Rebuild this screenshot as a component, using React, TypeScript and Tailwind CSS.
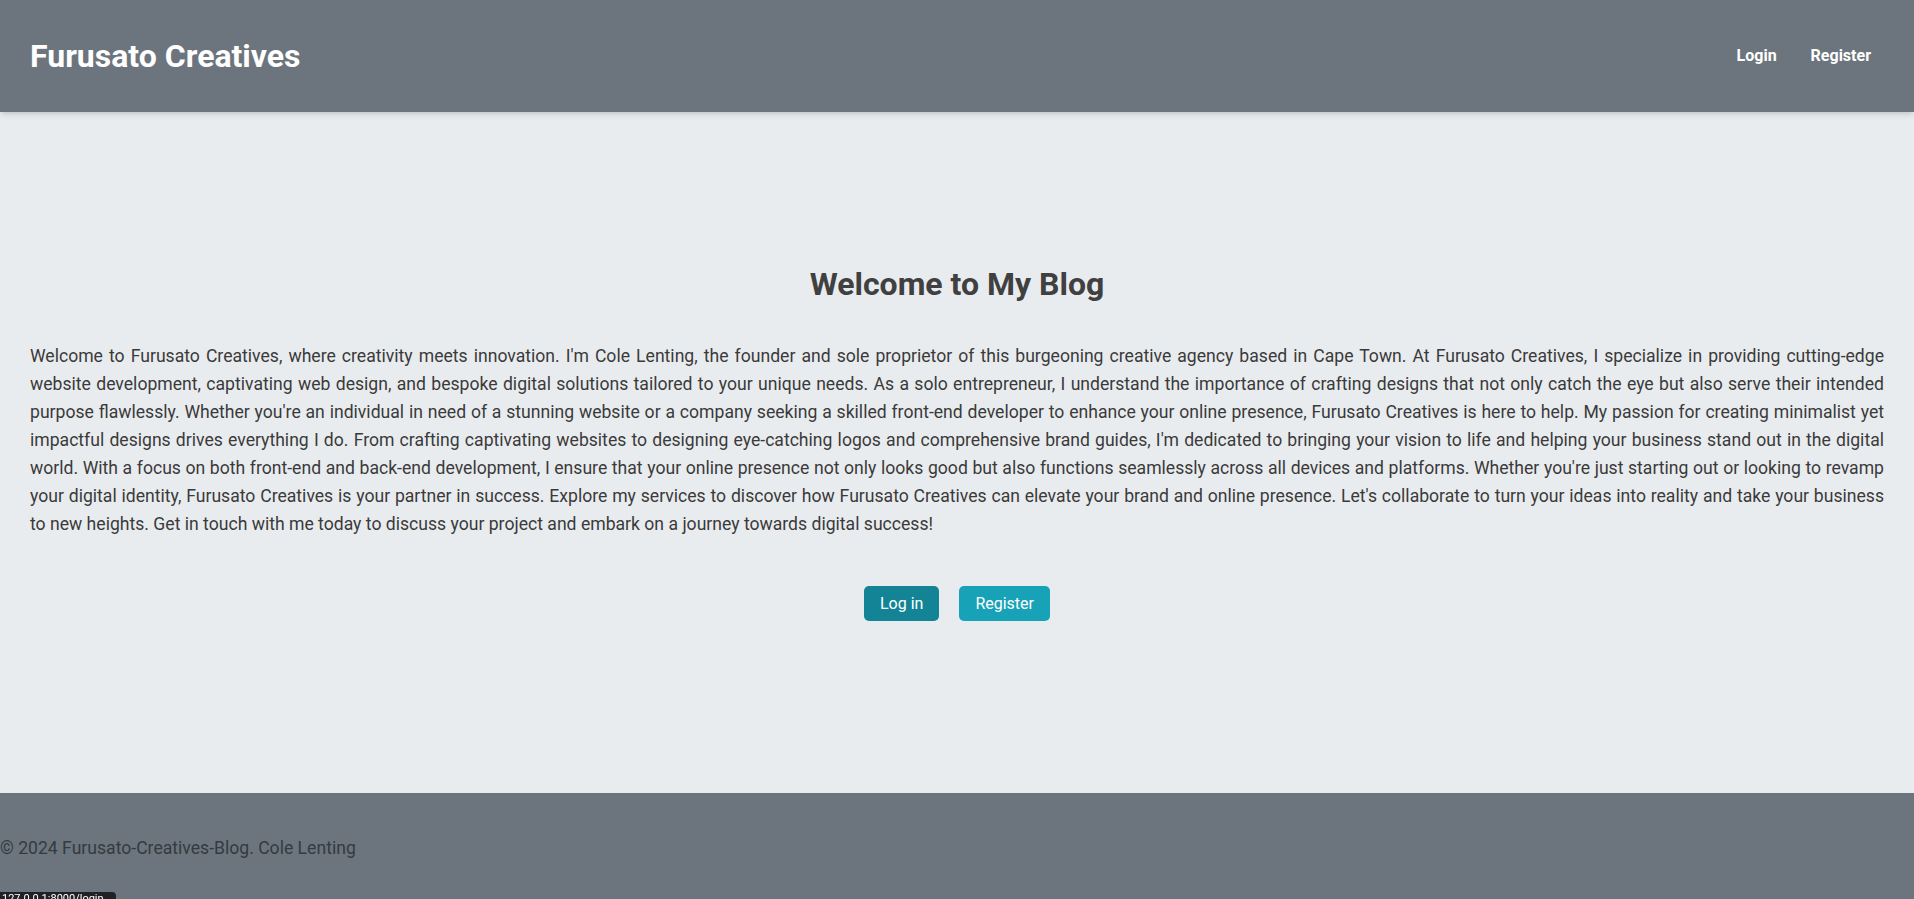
import React from "react";

const font = { fontFamily: "Roboto, 'Noto Sans', sans-serif" };

const Header = () => {
  return (
    <header className="relative z-10 h-[112px] bg-[#6c757d] shadow-md flex items-center justify-between pl-[30px] pr-[43px]">
      <a href="#" className="text-white font-bold text-[32px] leading-none">
        Furusato Creatives
      </a>
      <nav className="flex items-center gap-[34px]">
        <a href="#" className="text-white font-bold text-[16px]">
          Login
        </a>
        <a href="#" className="text-white font-bold text-[16px]">
          Register
        </a>
      </nav>
    </header>
  );
};

export default function App() {
  return (
    <div className="min-h-screen bg-[#e9ecef] flex flex-col" style={font}>
      <Header />

      {/* Hero */}
      <main className="h-[681px] px-[30px] pt-[153px]">
        <h1 className="text-center text-[32px] leading-[1.2] font-bold text-[#404040]">
          Welcome to My Blog
        </h1>
        <p className="mt-[39px] text-[17.6px] leading-[28px] text-[#3a3a3a] text-justify">
          Welcome to Furusato Creatives, where creativity meets innovation. I'm Cole Lenting, the founder and sole
          proprietor of this burgeoning creative agency based in Cape Town. At Furusato Creatives, I specialize in
          providing cutting-edge website development, captivating web design, and bespoke digital solutions tailored
          to your unique needs. As a solo entrepreneur, I understand the importance of crafting designs that not only
          catch the eye but also serve their intended purpose flawlessly. Whether you're an individual in need of a
          stunning website or a company seeking a skilled front-end developer to enhance your online presence,
          Furusato Creatives is here to help. My passion for creating minimalist yet impactful designs drives
          everything I do. From crafting captivating websites to designing eye-catching logos and comprehensive brand
          guides, I'm dedicated to bringing your vision to life and helping your business stand out in the digital
          world. With a focus on both front-end and back-end development, I ensure that your online presence not only
          looks good but also functions seamlessly across all devices and platforms. Whether you're just starting out
          or looking to revamp your digital identity, Furusato Creatives is your partner in success. Explore my
          services to discover how Furusato Creatives can elevate your brand and online presence. Let's collaborate to
          turn your ideas into reality and take your business to new heights. Get in touch with me today to discuss
          your project and embark on a journey towards digital success!
        </p>
        <div className="mt-[48px] flex justify-center gap-[20px]">
          <button className="h-[35px] px-4 rounded-[5px] bg-[#138496] text-white text-[16px]">Log in</button>
          <button className="h-[35px] px-4 rounded-[5px] bg-[#17a2b8] text-white text-[16px]">Register</button>
        </div>
      </main>

      <footer className="flex-1 bg-[#6c757d] pt-[43px] pb-[39px]">
        <p className="text-[17.6px] leading-[24px] text-[#343a40]">© 2024 Furusato-Creatives-Blog. Cole Lenting</p>
      </footer>

      {/* browser status bubble */}
      <div className="fixed left-0 bottom-0 h-[7px] w-[116px] overflow-hidden rounded-tr-[4px] bg-[#202124] text-[11px] leading-[14px] text-white pl-[2px]">
        127.0.0.1:8000/login
      </div>
    </div>
  );
}
